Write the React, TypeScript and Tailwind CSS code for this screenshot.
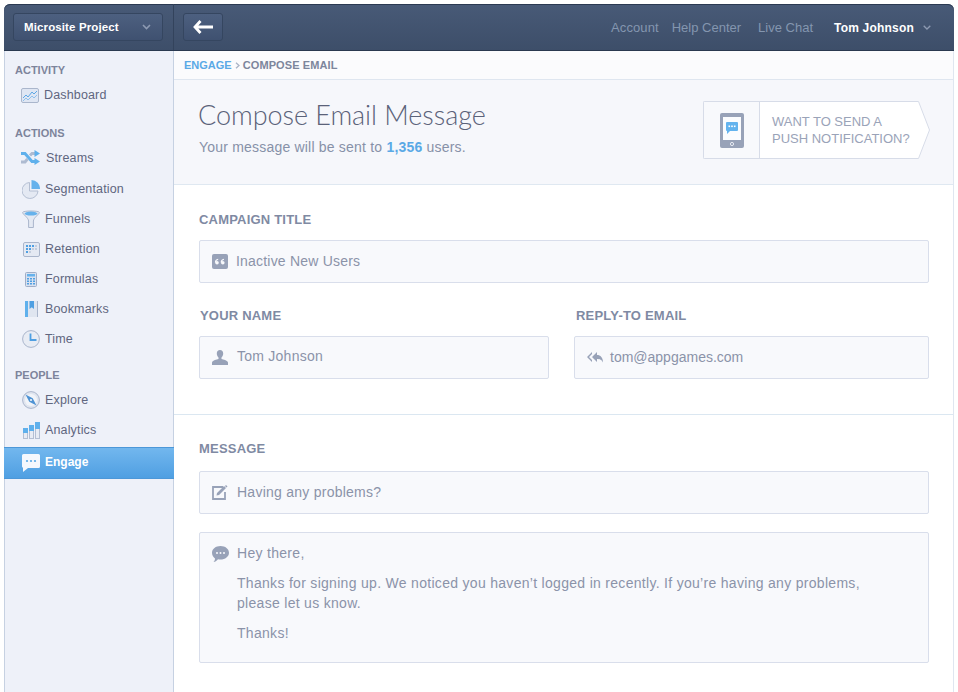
import React from "react";

const G = "#98a2b8";

const ic: Record<string, React.ReactNode> = {
  dashboard: (
    <svg width="18" height="15" viewBox="0 0 18 15">
      <rect x=".5" y=".5" width="17" height="14" rx="1.5" fill="#dfe6f3" stroke="#aab6cc" />
      <path d="M2 10l3-3 2 2 4-5 2 2 3-3" fill="none" stroke="#5ea8e6" strokeWidth="1" />
      <path d="M2 13l3-3 2 2 4-4 2 2 3-3" fill="none" stroke="#8fc0ec" strokeWidth="1" />
    </svg>
  ),
  streams: (
    <svg width="19" height="16" viewBox="0 0 19 16">
      <path d="M0 3.500h4l7 8h3" fill="none" stroke="#5fb0ec" strokeWidth="3" />
      <path d="M0 12h4l2.500-3M9 5.500l2-2h3" fill="none" stroke="#aebbd1" strokeWidth="3" />
      <path d="M13.500 0L19 3.500 13.500 7zM13.500 8L19 11.500 13.500 15z" fill="#5fb0ec" />
    </svg>
  ),
  segmentation: (
    <svg width="18" height="19" viewBox="0 0 18 19">
      <path d="M7.500 2.500a8 8 0 1 0 8.500 8.500H7.500z" fill="#e4e9f3" stroke="#b4bfd3" />
      <path d="M9.500 0A8.500 8.500 0 0 1 18 9H9.500z" fill="#66b2ec" />
    </svg>
  ),
  funnels: (
    <svg width="18" height="18" viewBox="0 0 18 18">
      <path d="M.6 2.500C.6.500 17.400.500 17.400 2.500c0 1.500-6 5.500-6 8.500v6.500H6.600V11c0-3-6-7-6-8.500z" fill="#e4e9f3" stroke="#aab6cc" />
      <ellipse cx="9" cy="3.600" rx="6.500" ry="2" fill="#66b2ec" />
    </svg>
  ),
  retention: (
    <svg width="17" height="15" viewBox="0 0 17 15">
      <rect x=".5" y=".5" width="16" height="14" rx="1.5" fill="#e4e9f3" stroke="#aab6cc" />
      <g fill="#4f9fe2">
        <rect x="3" y="3" width="2" height="2" /><rect x="6" y="3" width="2" height="2" /><rect x="9" y="3" width="2" height="2" />
        <rect x="3" y="6" width="2" height="2" /><rect x="6" y="6" width="2" height="2" />
        <rect x="3" y="9" width="2" height="2" />
      </g>
      <g fill="#c3cddd">
        <rect x="12" y="3" width="2" height="2" /><rect x="9" y="6" width="2" height="2" /><rect x="12" y="6" width="2" height="2" />
        <rect x="6" y="9" width="2" height="2" />
      </g>
    </svg>
  ),
  formulas: (
    <svg width="12" height="15" viewBox="0 0 12 15">
      <rect x=".5" y=".5" width="11" height="14" rx="1" fill="#d8e1f0" stroke="#a0aec7" />
      <rect x="2" y="2" width="8" height="2.500" fill="#66b2ec" />
      <g fill="#4f9fe2">
        <rect x="2" y="6" width="2" height="1.500" /><rect x="5" y="6" width="2" height="1.500" /><rect x="8" y="6" width="2" height="1.500" />
        <rect x="2" y="8.500" width="2" height="1.500" /><rect x="5" y="8.500" width="2" height="1.500" /><rect x="8" y="8.500" width="2" height="1.500" />
        <rect x="2" y="11" width="2" height="1.500" /><rect x="5" y="11" width="2" height="1.500" /><rect x="8" y="11" width="2" height="1.500" />
      </g>
    </svg>
  ),
  bookmarks: (
    <svg width="13" height="16" viewBox="0 0 13 16">
      <rect x="0" y="0" width="13" height="16" fill="#dfe5f0" />
      <rect x="0" y="0" width="3" height="16" fill="#5fb0ec" />
      <path d="M4.500 0h4.500v8L6.750 6.200 4.500 8z" fill="#4f9fe2" />
      <rect x="12" y="0" width="1" height="16" fill="#aab6cc" />
    </svg>
  ),
  time: (
    <svg width="18" height="18" viewBox="0 0 18 18">
      <circle cx="9" cy="9" r="8.400" fill="#e8ecf4" stroke="#aab6cc" />
      <path d="M8.500 3.500v6.500h6" fill="none" stroke="#4f9fe2" strokeWidth="1.800" />
    </svg>
  ),
  explore: (
    <svg width="18" height="18" viewBox="0 0 18 18">
      <circle cx="9" cy="9" r="8.400" fill="#e0e5ef" stroke="#aab6cc" />
      <circle cx="9" cy="9" r="6" fill="#f1f4f9" />
      <path d="M3.500 3.500l7.200 3.800 3.800 7.200-7.200-3.800z" fill="#4f93d4" />
      <circle cx="9" cy="9" r="1.100" fill="#f1f4f9" />
    </svg>
  ),
  analytics: (
    <svg width="17" height="17" viewBox="0 0 17 17">
      <rect x=".5" y="6.500" width="4" height="10" fill="#e8ecf4" stroke="#b4bfd3" /><rect x="0" y="6" width="5" height="5" fill="#5fb0ec" />
      <rect x="6.500" y="3.500" width="4" height="13" fill="#e8ecf4" stroke="#b4bfd3" /><rect x="6" y="3" width="5" height="6" fill="#5fb0ec" />
      <rect x="12.500" y=".5" width="4" height="16" fill="#e8ecf4" stroke="#b4bfd3" /><rect x="12" y="0" width="5" height="7" fill="#5fb0ec" />
    </svg>
  ),
  engage: (
    <svg width="18" height="18" viewBox="0 0 18 18">
      <path d="M1.500 0h15A1.500 1.500 0 0 1 18 1.500v11a1.500 1.500 0 0 1-1.500 1.500H6l-5 4v-4.200A1.500 1.500 0 0 1 0 12.500v-11A1.500 1.500 0 0 1 1.500 0z" fill="#f5f8fd" />
      <g fill="#5aa9e6"><circle cx="5" cy="7" r="1.100" /><circle cx="9" cy="7" r="1.100" /><circle cx="13" cy="7" r="1.100" /></g>
    </svg>
  ),
};

function NavItem({ icon, label, iconClass, itemClass }: { icon: string; label: string; iconClass: string; itemClass: string }) {
  return (
    <div className={`flex items-center text-[12.5px] tracking-[0.15px] text-[#5f667f] ${itemClass}`}>
      <span className={`flex shrink-0 items-center justify-center ${iconClass}`}>{ic[icon]}</span>
      <span>{label}</span>
    </div>
  );
}

function SectionLabel({ children, className = "" }: { children: React.ReactNode; className?: string }) {
  return <div className={`pl-[10px] text-[11px] font-bold leading-[13px] text-[#7d849b] ${className}`}>{children}</div>;
}

function FormLabel({ children, className = "" }: { children: React.ReactNode; className?: string }) {
  return <div className={`text-[13px] font-bold leading-[14px] tracking-[0.2px] text-[#7f8aa3] ${className}`}>{children}</div>;
}

function Field({ icon, value, gap, className = "", textClass = "" }: { icon: React.ReactNode; value: string; gap: string; className?: string; textClass?: string }) {
  return (
    <div className={`flex h-[43px] items-center rounded-[2px] border border-[#d9deeb] bg-[#f8f9fc] pl-[11px] text-[14px] text-[#8b93a9] ${className}`}>
      <span className={`flex w-[18px] shrink-0 items-center justify-center ${gap}`}>{icon}</span>
      <span className={textClass}>{value}</span>
    </div>
  );
}

export default function App() {
  return (
    <div className="h-[692px] w-[958px] overflow-hidden bg-white px-[4px] pt-[4px] font-['Liberation_Sans',sans-serif]">
      <div className="flex h-[47px] overflow-hidden rounded-t-[6px] border-b border-[#2a3950] bg-gradient-to-b from-[#485a77] to-[#3d4e69] shadow-[inset_0_1px_0_#2b3a52]">
        <div className="flex w-[170px] shrink-0 items-center border-r border-[#33435c] pl-[9px]">
          <div className="flex h-[28px] w-[150px] items-center justify-between rounded-[3px] border border-[#354660] bg-gradient-to-b from-[#4d6080] to-[#3f5170] pl-[10px] pr-[11px] text-[11.5px] font-bold tracking-[0.12px] text-white">
            <span className="pt-px">Microsite Project</span>
            <svg width="9" height="6" viewBox="0 0 9 6"><path d="M1 1l3.500 3.500L8 1" fill="none" stroke="#8d9ab2" strokeWidth="1.600" /></svg>
          </div>
        </div>
        <div className="flex flex-1 items-center pl-[9px] pr-[23px]">
          <div className="flex h-[28px] w-[40px] items-center justify-center rounded-[3px] border border-[#354660] bg-gradient-to-b from-[#4d6080] to-[#3f5170]">
            <svg width="20" height="14" viewBox="0 0 20 14"><path d="M7.500 1L2 7l5.500 6M3 7h17" fill="none" stroke="#fff" strokeWidth="2.800" /></svg>
          </div>
          <div className="ml-auto flex items-center pt-px text-[13px] text-[#8496af]">
            <span className="mr-[13px] tracking-[0.1px]">Account</span>
            <span className="mr-[17px]">Help Center</span>
            <span className="mr-[21px]">Live Chat</span>
            <span className="mr-[9px] text-[12px] font-bold tracking-[0.2px] text-white">Tom Johnson</span>
            <svg width="8" height="5" viewBox="0 0 8 5"><path d="M.7.7L4 4 7.300.7" fill="none" stroke="#8d9ab2" strokeWidth="1.300" /></svg>
          </div>
        </div>
      </div>

      <div className="flex h-[641px]">
        <aside className="w-[170px] shrink-0 border-x border-[#c6d1e2] bg-[#eef1f9] pt-[13px]">
          <SectionLabel>ACTIVITY</SectionLabel>
          <NavItem icon="dashboard" label="Dashboard" itemClass="mt-[8px] h-[20px]" iconClass="ml-[16px] mr-[5px] w-[18px]" />
          <SectionLabel className="mt-[22px]">ACTIONS</SectionLabel>
          <NavItem icon="streams" label="Streams" itemClass="mt-[8px] h-[20px]" iconClass="ml-[16px] mr-[6px] w-[19px]" />
          <NavItem icon="segmentation" label="Segmentation" itemClass="mt-[11px] h-[20px]" iconClass="ml-[16px] mr-[5px] w-[19px]" />
          <NavItem icon="funnels" label="Funnels" itemClass="mt-[10px] h-[20px]" iconClass="ml-[16px] mr-[5px] w-[19px]" />
          <NavItem icon="retention" label="Retention" itemClass="mt-[10px] h-[20px]" iconClass="ml-[17px] mr-[5px] w-[18px]" />
          <NavItem icon="formulas" label="Formulas" itemClass="mt-[10px] h-[20px]" iconClass="ml-[17px] mr-[5px] w-[18px]" />
          <NavItem icon="bookmarks" label="Bookmarks" itemClass="mt-[10px] h-[20px]" iconClass="ml-[17px] mr-[5px] w-[18px]" />
          <NavItem icon="time" label="Time" itemClass="mt-[10px] h-[20px]" iconClass="ml-[16px] mr-[5px] w-[19px]" />
          <SectionLabel className="mt-[20px]">PEOPLE</SectionLabel>
          <NavItem icon="explore" label="Explore" itemClass="mt-[8px] h-[20px]" iconClass="ml-[16px] mr-[5px] w-[19px]" />
          <NavItem icon="analytics" label="Analytics" itemClass="mt-[10px] h-[20px]" iconClass="ml-[17px] mr-[5px] w-[18px]" />
          <div className="-mx-px mt-[7px] flex h-[32px] items-center border-y border-[#4c97d8] bg-gradient-to-b from-[#72b7ee] to-[#4f9fe2] text-[12px] font-bold text-white">
            <span className="ml-[18px] mr-[5px] flex w-[18px] items-center justify-center">{ic.engage}</span>
            <span className="pb-[2px]">Engage</span>
          </div>
        </aside>

        <main className="min-w-0 flex-1 border-r border-[#dfe6f0] bg-white">
          <div className="flex h-[29px] items-center border-b border-[#dfe6f0] bg-[#fbfbfd] pl-[10px] pt-px text-[11px] font-bold text-[#7d869c]">
            <span className="text-[#5aa9e6]">ENGAGE</span>
            <svg className="mx-[3px]" width="5" height="7" viewBox="0 0 5 7"><path d="M1 .8L4 3.500 1 6.200" fill="none" stroke="#a9b3c6" strokeWidth="1.300" /></svg>
            <span className="tracking-[0.1px]">COMPOSE EMAIL</span>
          </div>

          <div className="flex h-[105px] items-start justify-between border-b border-[#dfe8f1] bg-[#f6f7fb] pl-[24px] pr-[36px]">
            <div className="pt-[18px]">
              <h1 className="font-['Lato',sans-serif] text-[27px] font-light leading-[33px] tracking-[-0.05px] text-[#5b6279]">Compose Email Message</h1>
              <p className="mt-[6px] pl-[1px] text-[14px] leading-[20px] tracking-[0.2px] text-[#8791a8]">
                Your message will be sent to <b className="text-[#5aa9e6]">1,356</b> users.
              </p>
            </div>
            <div className="relative mt-[21px] flex h-[58px] w-[214px] rounded-l-[2px] border-y border-l border-[#d7dce8] bg-white">
              <div className="flex w-[56px] items-center justify-center border-r border-[#d7dce8] bg-[#f8f9fc]">
                <svg width="24" height="35" viewBox="0 0 24 35">
                  <rect width="24" height="35" rx="2" fill={G} />
                  <rect x="3" y="4" width="18" height="23" fill="#fbfcfe" />
                  <path d="M7 9h10a1 1 0 0 1 1 1v7a1 1 0 0 1-1 1h-7l-3 3v-3a1 1 0 0 1-1-1v-7a1 1 0 0 1 1-1z" fill="#63b3ee" />
                  <g fill="#fff"><rect x="8.500" y="12.500" width="1.600" height="1.600" /><rect x="11.200" y="12.500" width="1.600" height="1.600" /><rect x="13.900" y="12.500" width="1.600" height="1.600" /></g>
                  <circle cx="12" cy="31" r="1.600" fill="none" stroke="#e8ebf2" strokeWidth="1" />
                </svg>
              </div>
              <div className="pl-[12px] pt-[11px] text-[13px] font-medium leading-[17px] text-[#9aa3b8]">WANT TO SEND A<br />PUSH NOTIFICATION?</div>
              <svg className="absolute left-full top-[-1px]" width="13" height="58" viewBox="0 0 13 58" preserveAspectRatio="none">
                <path d="M0 .5h1.500L12.500 29 1.500 57.500H0" fill="#fff" stroke="#d7dce8" />
              </svg>
            </div>
          </div>

          <section className="h-[230px] border-b border-[#dbe7f1] pl-[25px] pr-[24px] pt-[28px]">
            <FormLabel>CAMPAIGN TITLE</FormLabel>
            <Field
              className="mt-[13px]"
              textClass="tracking-[0.2px]"
              gap="mr-[7px]"
              value="Inactive New Users"
              icon={
                <svg width="16" height="15" viewBox="0 0 16 15">
                  <rect width="16" height="15" rx="2" fill={G} />
                  <g fill="#f8f9fc">
                    <circle cx="5" cy="8.700" r="1.800" /><circle cx="10.800" cy="8.700" r="1.800" />
                  </g>
                  <path d="M3.400 8.500c0-2 1-3 2.800-3.300M9.200 8.500c0-2 1-3 2.800-3.300" fill="none" stroke="#f8f9fc" strokeWidth="1.100" />
                </svg>
              }
            />
            <div className="mt-[26px] flex gap-[25px]">
              <div className="w-[350px]">
                <FormLabel className="pl-[1px]">YOUR NAME</FormLabel>
                <Field
                  className="mt-[13px]"
                  textClass="pb-[2px] tracking-[0.25px]"
                  gap="mr-[8px]"
                  value="Tom Johnson"
                  icon={
                    <svg width="16" height="15" viewBox="0 0 16 15">
                      <path d="M8 0c2 0 3.200 1.400 3.200 3.400 0 1.600-.8 3.200-1.700 4.200v1.500c1.900.8 5.500 1 6.500 3.400V15H0v-2.500c1-2.400 4.600-2.600 6.500-3.400V7.600C5.600 6.600 4.800 5 4.800 3.400 4.800 1.400 6 0 8 0z" fill={G} />
                    </svg>
                  }
                />
              </div>
              <div className="flex-1">
                <FormLabel className="pl-[2px]">REPLY-TO EMAIL</FormLabel>
                <Field
                  className="mt-[13px]"
                  gap="mr-[6px]"
                  value="tom@appgames.com"
                  icon={
                    <svg width="16" height="11" viewBox="0 0 16 11">
                      <path d="M5 0v2L2 5l3 3v2L0 5zM10 0v3c3.500 0 6 2.500 6 7.500C14.500 7.500 13 7 10 7v3L5 5z" fill={G} />
                    </svg>
                  }
                />
              </div>
            </div>
          </section>

          <section className="bg-white pl-[25px] pr-[24px] pt-[27px]">
            <FormLabel>MESSAGE</FormLabel>
            <Field
              className="mt-[15px]"
              textClass="tracking-[0.25px]"
              gap="mr-[8px]"
              value="Having any problems?"
              icon={
                <svg width="16" height="15" viewBox="0 0 16 15">
                  <path d="M11 2H1v12h12V7" fill="none" stroke={G} strokeWidth="1.800" />
                  <path d="M5 8l7-7 2 2-7 7-2.500.5zM14 0l1.500 1.500-1 1-1.500-1.500z" fill={G} />
                </svg>
              }
            />
            <div className="mt-[18px] flex h-[131px] rounded-[2px] border border-[#d9deeb] bg-[#f8f9fc] pl-[12px] pt-[10px] text-[14px] leading-[20px] tracking-[0.3px] text-[#8b93a9]">
              <span className="mr-[8px] mt-[3px] flex h-[17px] w-[17px] shrink-0 items-start justify-center">
                <svg width="17" height="16" viewBox="0 0 17 16">
                  <path d="M8.500 0C13.200 0 17 2.900 17 6.800s-3.800 6.800-8.500 6.800c-.9 0-1.700-.1-2.500-.3C4.800 14.800 3 16 1.500 16c.9-.9 1.500-2.100 1.500-3.600C1.200 11.100 0 9.100 0 6.800 0 2.900 3.800 0 8.500 0z" fill={G} />
                  <g fill="#f8f9fc"><circle cx="5" cy="7" r="1" /><circle cx="8.500" cy="7" r="1" /><circle cx="12" cy="7" r="1" /></g>
                </svg>
              </span>
              <div>
                <p>Hey there,</p>
                <p className="mt-[10px]">Thanks for signing up. We noticed you haven’t logged in recently. If you’re having any problems,<br />please let us know.</p>
                <p className="mt-[10px]">Thanks!</p>
              </div>
            </div>
          </section>
        </main>
      </div>
    </div>
  );
}
